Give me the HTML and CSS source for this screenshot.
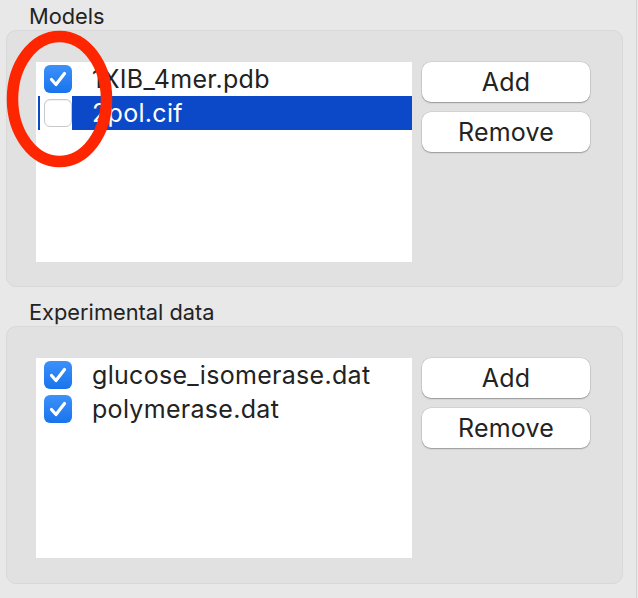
FILE: index.html
```html
<!DOCTYPE html>
<html>
<head>
<meta charset="utf-8">
<link rel="stylesheet" href="styles.css">
</head>
<body>
<div class="window">
  <div class="group-title">Models</div>
  <div class="group-box">
    <div class="list">
      <div class="row">
        <div class="cell"><span class="check on"><svg viewBox="0 0 28 28" width="28" height="28"><path d="M7.5 14.5 L12 19.5 L20.5 8.5" fill="none" stroke="#fff" stroke-width="3.2" stroke-linecap="round" stroke-linejoin="round"/></svg></span></div>
        <span class="name">1XIB_4mer.pdb</span>
      </div>
      <div class="row selected">
        <div class="cell"><span class="check off"></span></div>
        <span class="name">2pol.cif</span>
      </div>
    </div>
    <div class="buttons">
      <div class="btn">Add</div>
      <div class="btn">Remove</div>
    </div>
  </div>

  <div class="group-title second">Experimental data</div>
  <div class="group-box">
    <div class="list">
      <div class="row">
        <div class="cell"><span class="check on"><svg viewBox="0 0 28 28" width="28" height="28"><path d="M7.5 14.5 L12 19.5 L20.5 8.5" fill="none" stroke="#fff" stroke-width="3.2" stroke-linecap="round" stroke-linejoin="round"/></svg></span></div>
        <span class="name">glucose_isomerase.dat</span>
      </div>
      <div class="row">
        <div class="cell"><span class="check on"><svg viewBox="0 0 28 28" width="28" height="28"><path d="M7.5 14.5 L12 19.5 L20.5 8.5" fill="none" stroke="#fff" stroke-width="3.2" stroke-linecap="round" stroke-linejoin="round"/></svg></span></div>
        <span class="name">polymerase.dat</span>
      </div>
    </div>
    <div class="buttons">
      <div class="btn">Add</div>
      <div class="btn">Remove</div>
    </div>
  </div>

  <svg class="annotation" width="130" height="180" viewBox="0 0 130 180">
    <ellipse cx="59.5" cy="99" rx="47" ry="62.5" fill="none" stroke="#fe2600" stroke-width="11.5"/>
  </svg>
</div>
</body>
</html>
```

FILE: styles.css
```css
* { box-sizing: border-box; }
html, body { margin: 0; padding: 0; }
body {
  background: #e8e8e8;
  font-family: Inter, "Noto Sans", sans-serif;
  color: #222;
}
.window {
  position: relative;
  width: 637px;
  height: 598px;
  padding: 0 13px 0 6px;
  border-right: 1px solid #d3d3d3;
}
.group-title {
  height: 30px;
  line-height: 32px;
  padding-left: 23px;
  font-size: 21.8px;
  color: #232323;
}
.group-title.second { margin-top: 9px; }
.group-box {
  display: flex;
  align-items: flex-start;
  gap: 10px;
  height: 257px;
  padding: 31px 0 0 29px;
  background: #e1e1e1;
  border: 1px solid #d8d8d8;
  border-radius: 10px;
}
.group-title.second + .group-box { height: 258px; }
.list {
  width: 376px;
  height: 200px;
  background: #fff;
}
.row {
  display: flex;
  align-items: center;
  height: 34px;
  margin-left: 2px;
  padding-left: 2px;
}
.row.selected { background: #0c49c9; color: #fff; }
.cell {
  display: flex;
  align-items: center;
  width: 32px;
  height: 100%;
  padding-left: 4px;
  background: #fff;
}
.check {
  display: block;
  width: 28px;
  height: 28px;
  border-radius: 6px;
}
.check.on {
  background: linear-gradient(#3d91fa, #1873ec);
}
.check.on svg { display: block; }
.check.off {
  background: #fff;
  border: 1px solid #c9c9c9;
  box-shadow: inset 0 1px 1px rgba(0,0,0,0.06);
}
.name {
  margin-left: 20px;
  font-size: 25px;
  letter-spacing: 0.3px;
  white-space: nowrap;
}
.buttons {
  display: flex;
  flex-direction: column;
  gap: 10px;
  width: 168px;
}
.btn {
  height: 40px;
  line-height: 40px;
  text-align: center;
  font-size: 25px;
  letter-spacing: 0.2px;
  color: #232323;
  background: #fff;
  border-radius: 9px;
  box-shadow: 0 0 0 0.5px rgba(0,0,0,0.12), 0 1px 1.5px rgba(0,0,0,0.28);
}
.annotation {
  position: absolute;
  left: 0;
  top: 0;
}
```
